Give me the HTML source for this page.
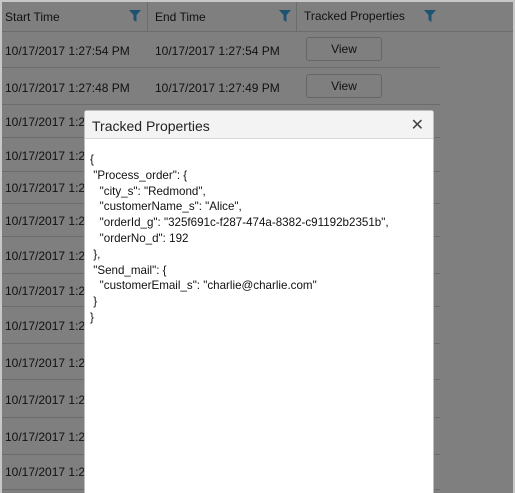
<!DOCTYPE html>
<html><head><style>
body{margin:0;width:515px;height:493px;overflow:hidden;background:#c8c8c8;font-family:"Liberation Sans",sans-serif;}
#frame{position:absolute;left:2px;top:2px;width:511px;height:491px;background:#7f7f7f;overflow:hidden;}
.t{position:absolute;font-size:12px;color:#111;white-space:nowrap;}
.hl{position:absolute;height:1px;background:#6c6c6c;}
.vl{position:absolute;width:1px;background:#6c6c6c;top:0;height:29px;}
.btn{position:absolute;left:304px;width:76px;height:24px;border:1px solid #666;border-radius:3px;box-sizing:border-box;font-size:12px;text-align:center;line-height:22px;color:#111;}
.fil{position:absolute;top:8px;}
#dlg{position:absolute;left:82px;top:108px;width:348px;height:400px;background:#fff;border:1px solid #bdbdbd;border-radius:3px;}
#dh{height:27px;background:#f3f3f3;border-bottom:1px solid #d8d8d8;font-size:14px;color:#222;line-height:30px;padding-left:7px;position:relative;}
#x{position:absolute;right:9px;top:0;font-size:16px;color:#444;}
pre{margin:0;padding:13px 0 0 5px;font-family:"Liberation Sans",sans-serif;font-size:11.6px;line-height:15.8px;color:#111;}
</style></head><body>
<div id="frame">
<div class="t" style="left:3px;top:8px">Start Time</div>
<div class="t" style="left:153px;top:8px">End Time</div>
<div class="t" style="left:302px;top:7px">Tracked Properties</div>
<svg class="fil" style="left:127px" width="12" height="12"><path d="M0 0H12L7.5 5V12L4.5 10V5Z" fill="#1d5370"/></svg>
<svg class="fil" style="left:277px" width="12" height="12"><path d="M0 0H12L7.5 5V12L4.5 10V5Z" fill="#1d5370"/></svg>
<svg class="fil" style="left:422px" width="12" height="12"><path d="M0 0H12L7.5 5V12L4.5 10V5Z" fill="#1d5370"/></svg>
<div class="vl" style="left:145px"></div><div class="vl" style="left:294px"></div>
<div class="hl" style="left:0;width:511px;top:29px"></div>
<div class="hl" style="left:0;width:438px;top:65px"></div>
<div class="hl" style="left:0;width:438px;top:102px"></div>
<div class="hl" style="left:0;width:438px;top:135px"></div>
<div class="hl" style="left:0;width:438px;top:169px"></div>
<div class="hl" style="left:0;width:438px;top:201px"></div>
<div class="hl" style="left:0;width:438px;top:234px"></div>
<div class="hl" style="left:0;width:438px;top:271px"></div>
<div class="hl" style="left:0;width:438px;top:304px"></div>
<div class="hl" style="left:0;width:438px;top:341px"></div>
<div class="hl" style="left:0;width:438px;top:377px"></div>
<div class="hl" style="left:0;width:438px;top:415px"></div>
<div class="hl" style="left:0;width:438px;top:452px"></div>
<div class="hl" style="left:0;width:438px;top:487px"></div>
<div class="t" style="left:3px;top:42px">10/17/2017 1:27:54 PM</div>
<div class="t" style="left:153px;top:42px">10/17/2017 1:27:54 PM</div>
<div class="btn" style="top:35px">View</div>
<div class="t" style="left:3px;top:79px">10/17/2017 1:27:48 PM</div>
<div class="t" style="left:153px;top:79px">10/17/2017 1:27:49 PM</div>
<div class="btn" style="top:72px">View</div>
<div class="t" style="left:3px;top:113px">10/17/2017 1:27</div>
<div class="t" style="left:3px;top:147px">10/17/2017 1:27</div>
<div class="t" style="left:3px;top:179px">10/17/2017 1:27</div>
<div class="t" style="left:3px;top:212px">10/17/2017 1:27</div>
<div class="t" style="left:3px;top:247px">10/17/2017 1:27</div>
<div class="t" style="left:3px;top:282px">10/17/2017 1:27</div>
<div class="t" style="left:3px;top:317px">10/17/2017 1:27</div>
<div class="t" style="left:3px;top:354px">10/17/2017 1:27</div>
<div class="t" style="left:3px;top:391px">10/17/2017 1:27</div>
<div class="t" style="left:3px;top:428px">10/17/2017 1:27</div>
<div class="t" style="left:3px;top:463px">10/17/2017 1:27</div>
<div id="dlg"><div id="dh">Tracked Properties<span id="x">✕</span></div>
<pre>{
 "Process_order": {
   "city_s": "Redmond",
   "customerName_s": "Alice",
   "orderId_g": "325f691c-f287-474a-8382-c91192b2351b",
   "orderNo_d": 192
 },
 "Send_mail": {
   "customerEmail_s": "charlie@charlie.com"
 }
}</pre></div>
</div>
</body></html>
